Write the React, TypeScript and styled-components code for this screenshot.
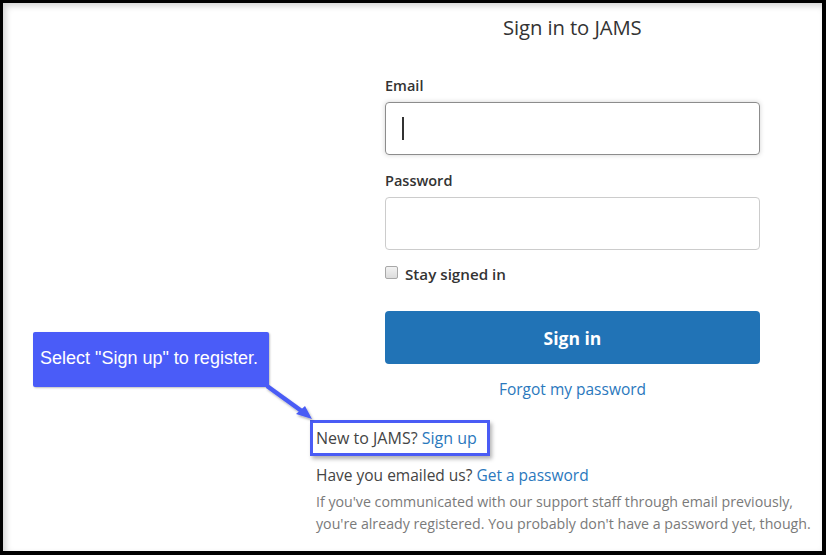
import React from "react";
import styled, { createGlobalStyle } from "styled-components";

const Global = createGlobalStyle`
  html, body { margin: 0; padding: 0; background: #fff; }
  body { font-family: "Open Sans", "Noto Sans", sans-serif; color: #333; }
  * { box-sizing: border-box; }
`;

const Frame = styled.div`
  position: relative;
  width: 826px;
  height: 555px;
  border: 3px solid #000;
  border-right-width: 4px;
  border-bottom-width: 4px;
  background: #fff;
  box-shadow: inset 3px 3px 6px rgba(0, 0, 0, 0.18);
  overflow: hidden;
`;

const Content = styled.div`
  display: flex;
  flex-direction: column;
  padding-top: 12px;
`;

const Title = styled.h1`
  margin: 0;
  padding-left: 500px;
  font-size: 20.3px;
  font-weight: 400;
  color: #333;
  line-height: 24px;
  letter-spacing: -0.1px;
`;

const Form = styled.div`
  display: flex;
  flex-direction: column;
  width: 375px;
  margin-left: 382px;
  margin-top: 37px;
`;

const Label = styled.div`
  font-size: 14.5px;
  font-weight: 600;
  color: #333;
  line-height: 20px;
  margin-bottom: 6px;
`;

const Field = styled.div<{ $focused?: boolean }>`
  height: 53px;
  border: 1px solid ${(p) => (p.$focused ? "#8c8c8c" : "#ccc")};
  border-radius: 4px;
  box-shadow: ${(p) => (p.$focused ? "0 0 5px rgba(0,0,0,0.18)" : "none")};
  display: flex;
  align-items: center;
  padding-left: 16px;
  margin-bottom: 16px;
`;

const Caret = styled.span`
  width: 2px;
  height: 23px;
  background: #333;
`;

const CheckRow = styled.label`
  display: flex;
  align-items: center;
  gap: 7px;
  font-size: 15.2px;
  font-weight: 600;
  color: #333;
  line-height: 20px;
  margin-top: -2px;
`;

const Box = styled.span`
  width: 13px;
  height: 13px;
  border: 1px solid #a8a8a8;
  border-radius: 2px;
  background: linear-gradient(#f2f2f2, #dcdcdc);
  margin-top: -3px;
`;

const Button = styled.button`
  margin-top: 27px;
  height: 53px;
  border: none;
  border-radius: 4px;
  background: #2173b6;
  color: #fff;
  font-family: "Open Sans", "Noto Sans", sans-serif;
  font-size: 17.5px;
  font-weight: 700;
  width: 100%;
`;

const Centered = styled.div`
  text-align: center;
  margin-top: 14px;
  font-size: 15.5px;
  line-height: 22px;
`;

const Link = styled.a`
  color: #2a78bd;
  text-decoration: none;
`;

const Footer = styled.div`
  display: flex;
  flex-direction: column;
  margin-left: 307px;
  margin-top: 20px;
  line-height: 22px;
  color: #444;
`;

const Highlight = styled.div`
  align-self: flex-start;
  border: 3px solid #4a5cf5;
  padding: 4px 10px 4px 3px;
  font-size: 16px;
  box-shadow: 2px 3px 4px rgba(0, 0, 0, 0.3);
`;

const Line = styled.div`
  padding-left: 6px;
  margin-top: 8px;
  font-size: 15.5px;
`;

const Note = styled.p`
  margin: 5px 0 0 6px;
  font-size: 14.2px;
  line-height: 22px;
  color: #7a7a7a;
`;

const Callout = styled.div`
  position: absolute;
  left: 30px;
  top: 329px;
  width: 236px;
  height: 55px;
  background: #4a5cf8;
  border-radius: 2px;
  color: #fff;
  font-family: "Liberation Sans", Arial, sans-serif;
  font-size: 18px;
  display: flex;
  align-items: center;
  padding-left: 7px;
  padding-bottom: 2px;
  white-space: nowrap;
  box-shadow: 1px 1px 2px rgba(0, 0, 0, 0.25);
`;

const Arrow = styled.svg`
  position: absolute;
  left: 260px;
  top: 378px;
  overflow: visible;
`;

export default function App() {
  return (
    <>
      <Global />
      <Frame>
        <Content>
          <Title>Sign in to JAMS</Title>
          <Form>
            <Label>Email</Label>
            <Field $focused>
              <Caret />
            </Field>
            <Label>Password</Label>
            <Field />
            <CheckRow>
              <Box />
              Stay signed in
            </CheckRow>
            <Button>Sign in</Button>
            <Centered>
              <Link>Forgot my password</Link>
            </Centered>
          </Form>
          <Footer>
            <Highlight>
              New to JAMS? <Link>Sign up</Link>
            </Highlight>
            <Line>
              Have you emailed us? <Link>Get a password</Link>
            </Line>
            <Note>
              If you've communicated with our support staff through email previously,
              <br />
              you're already registered. You probably don't have a password yet, though.
            </Note>
          </Footer>
        </Content>
        <Callout>Select "Sign up" to register.</Callout>
        <Arrow width="60" height="50">
          <defs>
            <filter id="sh" x="-20%" y="-20%" width="150%" height="150%">
              <feDropShadow dx="1.5" dy="2" stdDeviation="1.2" floodColor="#000" floodOpacity="0.3" />
            </filter>
          </defs>
          <g filter="url(#sh)">
            <line x1="4" y1="5" x2="40" y2="31" stroke="#4a5cf5" strokeWidth="4.5" />
            <polygon points="49,38 33,33 42,25" fill="#4a5cf5" />
          </g>
        </Arrow>
      </Frame>
    </>
  );
}
